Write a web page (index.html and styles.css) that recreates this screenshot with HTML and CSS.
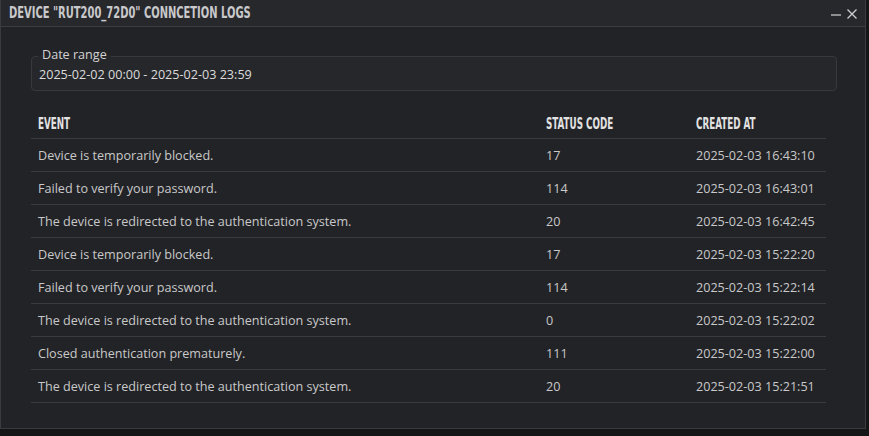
FILE: index.html
```html
<!DOCTYPE html>
<html lang="en">
<head>
<meta charset="utf-8">
<title>Connection logs</title>
<link rel="stylesheet" href="styles.css">
</head>
<body>
<div class="window">
  <div class="titlebar">
    <h1 class="title"><span class="condensed">DEVICE "RUT200_72D0" CONNCETION LOGS</span></h1>
    <div class="controls">
      <svg class="icon" width="12" height="12" viewBox="0 0 12 12"><path d="M1 7h10" stroke="#cfd0d2" stroke-width="1.2" fill="none"/></svg>
      <svg class="icon" width="12" height="12" viewBox="0 0 12 12"><path d="M1.5 1.5l9 9M10.5 1.5l-9 9" stroke="#cfd0d2" stroke-width="1.3" fill="none"/></svg>
    </div>
  </div>
  <div class="content">
    <div class="field">
      <span class="field-label">Date range</span>
      <div class="field-value">2025-02-02 00:00 - 2025-02-03 23:59</div>
    </div>
    <table class="logs">
      <thead>
        <tr><th class="c-event"><span class="condensed">EVENT</span></th><th class="c-code"><span class="condensed">STATUS CODE</span></th><th class="c-date"><span class="condensed">CREATED AT</span></th></tr>
      </thead>
      <tbody>
        <tr><td>Device is temporarily blocked.</td><td>17</td><td>2025-02-03 16:43:10</td></tr>
        <tr><td>Failed to verify your password.</td><td>114</td><td>2025-02-03 16:43:01</td></tr>
        <tr><td>The device is redirected to the authentication system.</td><td>20</td><td>2025-02-03 16:42:45</td></tr>
        <tr><td>Device is temporarily blocked.</td><td>17</td><td>2025-02-03 15:22:20</td></tr>
        <tr><td>Failed to verify your password.</td><td>114</td><td>2025-02-03 15:22:14</td></tr>
        <tr><td>The device is redirected to the authentication system.</td><td>0</td><td>2025-02-03 15:22:02</td></tr>
        <tr><td>Closed authentication prematurely.</td><td>111</td><td>2025-02-03 15:22:00</td></tr>
        <tr><td>The device is redirected to the authentication system.</td><td>20</td><td>2025-02-03 15:21:51</td></tr>
      </tbody>
    </table>
  </div>
</div>
</body>
</html>
```
FILE: styles.css
```css
html, body {
  margin: 0;
  padding: 0;
  background: #141517;
  height: 100%;
}
body {
  font-family: "Open Sans", "Noto Sans", sans-serif;
  color: #cfcfcf;
}
.window {
  width: 864px;
  height: 428px;
  background: #222327;
  border: 1px solid #3a3b3f;
  border-top: none;
}
.titlebar {
  height: 26px;
  background: #27282c;
  border-bottom: 1px solid #3c3d41;
  display: flex;
  align-items: center;
  justify-content: space-between;
  padding: 0 7px 0 8px;
}
.title {
  margin: 0;
  font-family: "DejaVu Sans Condensed", "DejaVu Sans", sans-serif;
  font-weight: bold;
  font-size: 16px;
  color: #c9c9cb;
  line-height: 26px;
  white-space: nowrap;
}
.condensed {
  display: inline-block;
  transform-origin: left center;
  white-space: nowrap;
}
.title .condensed { transform: scaleX(0.69); }
.controls {
  display: flex;
  gap: 4px;
  align-items: center;
  padding-top: 2px;
}
.icon { display: block; }
.content {
  padding: 29px 28px 0 30px;
}
.field {
  position: relative;
  height: 33px;
  border: 1px solid #38393d;
  border-radius: 4px;
  background: #26272b;
  display: flex;
  align-items: center;
  padding-left: 7px;
}
.field-label {
  position: absolute;
  left: 6px;
  top: -10px;
  padding: 0 4px;
  font-size: 12.6px;
  line-height: 16px;
  color: #d2d2d2;
  background: linear-gradient(#222327 50%, #26272b 50%);
}
.field-value {
  font-size: 12.6px;
  color: #dcdcdc;
  padding-top: 2px;
}
.logs {
  margin-top: 15px;
  width: 795px;
  border-collapse: collapse;
  table-layout: fixed;
}
.logs th, .logs td {
  text-align: left;
  padding: 0 7px;
  height: 32px;
  border-bottom: 1px solid #3a3b3f;
  font-size: 12.6px;
}
.logs th {
  font-family: "DejaVu Sans Condensed", "DejaVu Sans", sans-serif;
  font-weight: bold;
  font-size: 15px;
  color: #e2e2e2;
  height: 28px;
  padding-top: 4px;
  line-height: 18px;
}
.logs th .condensed { transform: scaleX(0.65); }
.logs td { color: #c9c9c9; }
.c-event { width: 494px; }
.c-code { width: 136px; }
```
